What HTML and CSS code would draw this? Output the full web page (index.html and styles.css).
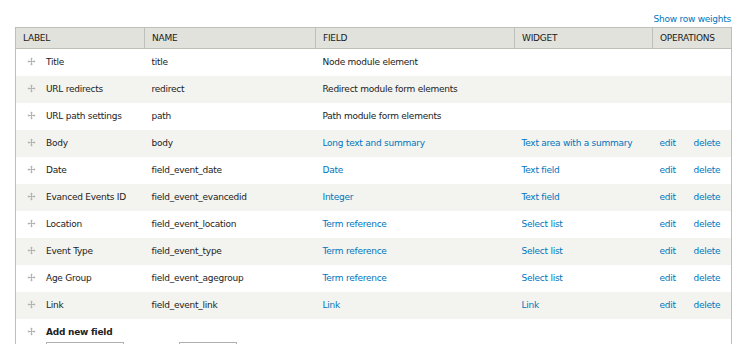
FILE: index.html
```
<!DOCTYPE html>
<html lang="en">
<head>
    <meta charset="UTF-8">
    <title>Manage fields</title>
    <link rel="stylesheet" href="styles.css">
</head>
<body>
    <div class="page">
        <div class="weights">
            <a href="#">Show row weights</a>
        </div>

        <table class="fields">
            <colgroup>
                <col class="col-label">
                <col class="col-name">
                <col class="col-field">
                <col class="col-widget">
                <col class="col-edit">
                <col class="col-delete">
            </colgroup>
            <thead>
                <tr>
                    <th>Label</th>
                    <th>Name</th>
                    <th>Field</th>
                    <th>Widget</th>
                    <th colspan="2">Operations</th>
                </tr>
            </thead>
            <tbody>
                <tr>
                    <td><span class="drag"><svg viewBox="0 0 9 9" width="9" height="9"><path d="M4.5 0.5 L6 2.2 H5 V4 H6.8 V3 L8.5 4.5 L6.8 6 V5 H5 V6.8 H6 L4.5 8.5 L3 6.8 H4 V5 H2.2 V6 L0.5 4.5 L2.2 3 V4 H4 V2.2 H3 Z"/></svg></span>Title</td>
                    <td>title</td>
                    <td>Node module element</td>
                    <td></td>
                    <td></td>
                    <td></td>
                </tr>
                <tr>
                    <td><span class="drag"><svg viewBox="0 0 9 9" width="9" height="9"><path d="M4.5 0.5 L6 2.2 H5 V4 H6.8 V3 L8.5 4.5 L6.8 6 V5 H5 V6.8 H6 L4.5 8.5 L3 6.8 H4 V5 H2.2 V6 L0.5 4.5 L2.2 3 V4 H4 V2.2 H3 Z"/></svg></span>URL redirects</td>
                    <td>redirect</td>
                    <td>Redirect module form elements</td>
                    <td></td>
                    <td></td>
                    <td></td>
                </tr>
                <tr>
                    <td><span class="drag"><svg viewBox="0 0 9 9" width="9" height="9"><path d="M4.5 0.5 L6 2.2 H5 V4 H6.8 V3 L8.5 4.5 L6.8 6 V5 H5 V6.8 H6 L4.5 8.5 L3 6.8 H4 V5 H2.2 V6 L0.5 4.5 L2.2 3 V4 H4 V2.2 H3 Z"/></svg></span>URL path settings</td>
                    <td>path</td>
                    <td>Path module form elements</td>
                    <td></td>
                    <td></td>
                    <td></td>
                </tr>
                <tr>
                    <td><span class="drag"><svg viewBox="0 0 9 9" width="9" height="9"><path d="M4.5 0.5 L6 2.2 H5 V4 H6.8 V3 L8.5 4.5 L6.8 6 V5 H5 V6.8 H6 L4.5 8.5 L3 6.8 H4 V5 H2.2 V6 L0.5 4.5 L2.2 3 V4 H4 V2.2 H3 Z"/></svg></span>Body</td>
                    <td>body</td>
                    <td><a href="#">Long text and summary</a></td>
                    <td><a href="#">Text area with a summary</a></td>
                    <td><a href="#">edit</a></td>
                    <td><a href="#">delete</a></td>
                </tr>
                <tr>
                    <td><span class="drag"><svg viewBox="0 0 9 9" width="9" height="9"><path d="M4.5 0.5 L6 2.2 H5 V4 H6.8 V3 L8.5 4.5 L6.8 6 V5 H5 V6.8 H6 L4.5 8.5 L3 6.8 H4 V5 H2.2 V6 L0.5 4.5 L2.2 3 V4 H4 V2.2 H3 Z"/></svg></span>Date</td>
                    <td>field_event_date</td>
                    <td><a href="#">Date</a></td>
                    <td><a href="#">Text field</a></td>
                    <td><a href="#">edit</a></td>
                    <td><a href="#">delete</a></td>
                </tr>
                <tr>
                    <td><span class="drag"><svg viewBox="0 0 9 9" width="9" height="9"><path d="M4.5 0.5 L6 2.2 H5 V4 H6.8 V3 L8.5 4.5 L6.8 6 V5 H5 V6.8 H6 L4.5 8.5 L3 6.8 H4 V5 H2.2 V6 L0.5 4.5 L2.2 3 V4 H4 V2.2 H3 Z"/></svg></span>Evanced Events ID</td>
                    <td>field_event_evancedid</td>
                    <td><a href="#">Integer</a></td>
                    <td><a href="#">Text field</a></td>
                    <td><a href="#">edit</a></td>
                    <td><a href="#">delete</a></td>
                </tr>
                <tr>
                    <td><span class="drag"><svg viewBox="0 0 9 9" width="9" height="9"><path d="M4.5 0.5 L6 2.2 H5 V4 H6.8 V3 L8.5 4.5 L6.8 6 V5 H5 V6.8 H6 L4.5 8.5 L3 6.8 H4 V5 H2.2 V6 L0.5 4.5 L2.2 3 V4 H4 V2.2 H3 Z"/></svg></span>Location</td>
                    <td>field_event_location</td>
                    <td><a href="#">Term reference</a></td>
                    <td><a href="#">Select list</a></td>
                    <td><a href="#">edit</a></td>
                    <td><a href="#">delete</a></td>
                </tr>
                <tr>
                    <td><span class="drag"><svg viewBox="0 0 9 9" width="9" height="9"><path d="M4.5 0.5 L6 2.2 H5 V4 H6.8 V3 L8.5 4.5 L6.8 6 V5 H5 V6.8 H6 L4.5 8.5 L3 6.8 H4 V5 H2.2 V6 L0.5 4.5 L2.2 3 V4 H4 V2.2 H3 Z"/></svg></span>Event Type</td>
                    <td>field_event_type</td>
                    <td><a href="#">Term reference</a></td>
                    <td><a href="#">Select list</a></td>
                    <td><a href="#">edit</a></td>
                    <td><a href="#">delete</a></td>
                </tr>
                <tr>
                    <td><span class="drag"><svg viewBox="0 0 9 9" width="9" height="9"><path d="M4.5 0.5 L6 2.2 H5 V4 H6.8 V3 L8.5 4.5 L6.8 6 V5 H5 V6.8 H6 L4.5 8.5 L3 6.8 H4 V5 H2.2 V6 L0.5 4.5 L2.2 3 V4 H4 V2.2 H3 Z"/></svg></span>Age Group</td>
                    <td>field_event_agegroup</td>
                    <td><a href="#">Term reference</a></td>
                    <td><a href="#">Select list</a></td>
                    <td><a href="#">edit</a></td>
                    <td><a href="#">delete</a></td>
                </tr>
                <tr>
                    <td><span class="drag"><svg viewBox="0 0 9 9" width="9" height="9"><path d="M4.5 0.5 L6 2.2 H5 V4 H6.8 V3 L8.5 4.5 L6.8 6 V5 H5 V6.8 H6 L4.5 8.5 L3 6.8 H4 V5 H2.2 V6 L0.5 4.5 L2.2 3 V4 H4 V2.2 H3 Z"/></svg></span>Link</td>
                    <td>field_event_link</td>
                    <td><a href="#">Link</a></td>
                    <td><a href="#">Link</a></td>
                    <td><a href="#">edit</a></td>
                    <td><a href="#">delete</a></td>
                </tr>
                <tr class="add-row">
                    <td colspan="6">
                        <div class="add-title"><span class="drag"><svg viewBox="0 0 9 9" width="9" height="9"><path d="M4.5 0.5 L6 2.2 H5 V4 H6.8 V3 L8.5 4.5 L6.8 6 V5 H5 V6.8 H6 L4.5 8.5 L3 6.8 H4 V5 H2.2 V6 L0.5 4.5 L2.2 3 V4 H4 V2.2 H3 Z"/></svg></span>Add new field</div>
                        <div class="add-inputs">
                            <input type="text" class="input-label">
                            <input type="text" class="input-name">
                        </div>
                    </td>
                </tr>
            </tbody>
        </table>
    </div>
</body>
</html>
```

FILE: styles.css
```
* {
    margin: 0;
    padding: 0;
    box-sizing: border-box;
}

body {
    background-color: #fff;
    font-family: "DejaVu Sans", Verdana, sans-serif;
    font-size: 9px;
    letter-spacing: -0.25px;
    color: #222;
    overflow: hidden;
}

a {
    color: #0074bd;
    text-decoration: none;
}

.page {
    padding: 13px 15px 0 15px;
}

.weights {
    text-align: right;
    height: 14px;
    line-height: 12px;
    font-size: 9px;
}

.fields {
    width: 716px;
    border-collapse: collapse;
    table-layout: fixed;
    border: 1px solid #bebfb9;
    border-bottom: none;
}

.col-label { width: 129px; }
.col-name { width: 171px; }
.col-field { width: 199px; }
.col-widget { width: 138px; }
.col-edit { width: 34px; }
.col-delete { width: 45px; }

.fields th {
    background-color: #e1e2dc;
    border: 1px solid #bebfb9;
    height: 21px;
    padding: 0 7px;
    text-align: left;
    text-transform: uppercase;
    font-weight: normal;
    color: #1a1a1a;
    font-size: 9px;
}

.fields td {
    height: 27px;
    padding: 0 7px;
    vertical-align: middle;
    white-space: nowrap;
    overflow: hidden;
}

.fields tbody tr:nth-child(even) {
    background-color: #f3f4ef;
}

.fields tbody tr:nth-child(odd) {
    background-color: #fff;
}

.fields td:nth-child(5) {
    padding-right: 0;
}

.fields td:nth-child(6) {
    padding-right: 0;
}

.drag {
    display: inline-block;
    width: 23px;
    padding-left: 4px;
    vertical-align: -1px;
}

.drag svg {
    fill: #b3b3b3;
}

.add-row td {
    vertical-align: top;
    padding-top: 7px;
}

.add-title {
    font-weight: bold;
    height: 12px;
    line-height: 12px;
}

.add-inputs {
    padding: 4px 0 0 23px;
    display: flex;
    gap: 55px;
}

.add-inputs input {
    height: 20px;
    border: 1px solid #b0b0b0;
}

.input-label { width: 78px; }
.input-name { width: 58px; }
```
